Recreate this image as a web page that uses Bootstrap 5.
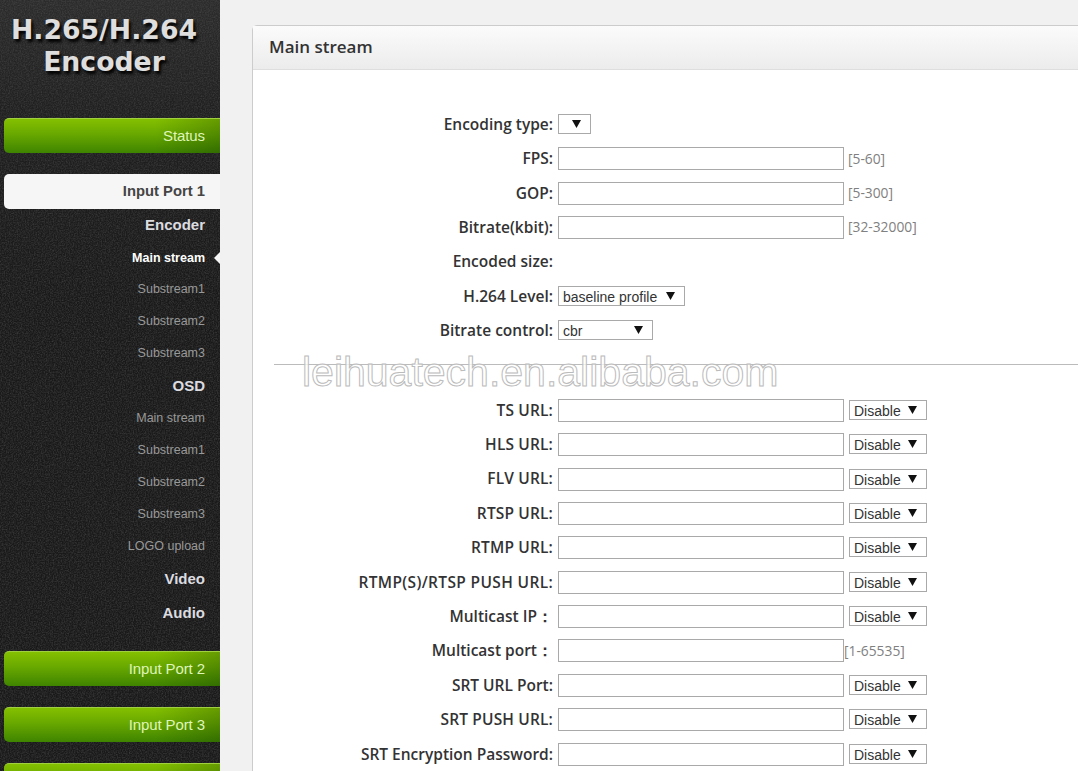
<!DOCTYPE html>
<html lang="en">
<head>
<meta charset="utf-8">
<title>Main stream</title>
<link href="https://cdn.jsdelivr.net/npm/bootstrap@5.3.0/dist/css/bootstrap.min.css" rel="stylesheet">
<style>
html,body{height:771px;overflow:hidden;}
body{background:#f1f1f1;font-family:"Open Sans",sans-serif;}
.shell{height:771px;position:relative;}
.side{width:220px;flex:none;background-color:#191919;font-family:"Liberation Sans",sans-serif;position:relative;overflow:hidden;}
.side::before{content:"";position:absolute;inset:0;background:linear-gradient(180deg,rgba(80,80,80,.34) 0,rgba(60,60,60,.2) 110px,rgba(0,0,0,0) 300px),url("data:image/svg+xml,%3Csvg xmlns='http://www.w3.org/2000/svg' width='220' height='771'%3E%3Cfilter id='n'%3E%3CfeTurbulence type='fractalNoise' baseFrequency='.75' numOctaves='2' seed='4'/%3E%3CfeColorMatrix values='0 0 0 0 1 0 0 0 0 1 0 0 0 0 1 .26 0 0 0 -.09'/%3E%3C/filter%3E%3Crect width='220' height='771' filter='url(%23n)'/%3E%3C/svg%3E");}
.side>*{position:relative;}
.logo{height:118px;padding-top:14px;text-align:center;font-family:"DejaVu Sans",sans-serif;font-weight:700;font-size:26.7px;line-height:32px;color:#dedede;text-shadow:2px 3px 3px #000;}
.logo div{margin-left:-12px;}
.pbtn{height:35px;margin-left:4px;padding-right:15px;border-radius:5px 0 0 5px;display:flex;align-items:center;justify-content:flex-end;font-size:15px;letter-spacing:-.1px;color:#dff5b8;background:linear-gradient(90deg,rgba(0,0,0,0) 70%,rgba(0,30,0,.22) 100%),linear-gradient(180deg,#84c000 0,#68a800 45%,#3f8400 100%);border-top:1px solid #a0d040;}
.pbtn.on{background:#f6f6f6;border:0;color:#444;font-weight:700;font-size:14.8px;letter-spacing:0;}
.gap-a{margin-top:21px;}
.m-item{height:33px;display:flex;align-items:center;justify-content:flex-end;padding-right:15px;font-size:15px;font-weight:700;color:#dcdce0;}
.m-item.tall{height:34px;}
.s-item{height:31.9px;display:flex;align-items:center;justify-content:flex-end;padding-right:15px;font-size:12.5px;color:#999;position:relative;}
.s-item.cur{color:#fff;font-weight:700;}
.s-item.cur::after{content:"";position:absolute;right:0;top:10px;border:6px solid transparent;border-right-color:#f6f6f6;border-left-width:0;}
.content{flex:1 1 auto;padding:25px 0 0 32px;min-width:0;overflow:hidden;}
.panel-box{width:900px;height:900px;border:1px solid #ccc;border-radius:5px 0 0 0;background:#fff;--bs-card-bg:#fff;}
.panel-top{height:44px;background:linear-gradient(180deg,#fbfbfb,#ececec);border-bottom:1px solid #dedede;padding:0 16px 2px;display:flex;align-items:center;font-size:17px;font-weight:600;color:#333;}
.panel-in{padding:37.3px 0 0 0;}
.frow{height:34.4px;display:flex;align-items:center;}
.flabel{width:305px;flex:none;text-align:right;padding-right:5px;font-size:15.5px;font-weight:600;color:#333;white-space:nowrap;}
.flabel.caps{letter-spacing:.15px;}
.flabel.caps-lg{letter-spacing:.35px;}
.tbox{width:286px;height:23px;flex:none;border:1px solid #a9a9a9;background:#fff;padding:0;border-radius:0;}
.fhint{margin-left:4px;font-size:13.8px;color:#808080;white-space:nowrap;}
.fhint.tight{margin-left:0;}
.pick{appearance:none;-webkit-appearance:none;height:20px;margin-bottom:1px;border:1px solid #a9a9a9;border-radius:0;padding:0 0 0 4px;font-family:"Liberation Sans",sans-serif;font-size:14px;color:#333;background:#fff url("data:image/svg+xml,%3Csvg xmlns='http://www.w3.org/2000/svg' width='9' height='9'%3E%3Cpath d='M0 1h9L4.500 9z' fill='%23111'/%3E%3C/svg%3E") no-repeat right 9px top 4px;}
.p-dis{width:78px;margin-left:5px;}
.p-enc{width:33px;}
.p-h{width:127px;}
.p-br{width:95px;}
.rule{height:1px;background:#bbb;margin:16px 0 28px 21px;}
.mark-wm{position:absolute;left:302px;top:348px;font-family:"Liberation Sans",sans-serif;font-size:41px;line-height:48px;color:rgba(255,255,255,.75);-webkit-text-stroke:1px #bbb;white-space:nowrap;pointer-events:none;}
</style>
</head>
<body>
<div class="shell d-flex">
  <aside class="side">
    <div class="logo"><div>H.265/H.264</div><div>Encoder</div></div>
    <div class="pbtn">Status</div>
    <div class="pbtn on gap-a">Input Port 1</div>
    <div class="m-item">Encoder</div>
    <div class="s-item cur">Main stream</div>
    <div class="s-item">Substream1</div>
    <div class="s-item">Substream2</div>
    <div class="s-item">Substream3</div>
    <div class="m-item">OSD</div>
    <div class="s-item">Main stream</div>
    <div class="s-item">Substream1</div>
    <div class="s-item">Substream2</div>
    <div class="s-item">Substream3</div>
    <div class="s-item">LOGO upload</div>
    <div class="m-item tall">Video</div>
    <div class="m-item tall">Audio</div>
    <div class="pbtn gap-a">Input Port 2</div>
    <div class="pbtn gap-a">Input Port 3</div>
    <div class="pbtn gap-a"></div>
  </aside>
  <main class="content">
    <div class="card panel-box">
      <div class="panel-top">Main stream</div>
      <div class="panel-in">
        <div class="frow"><label class="flabel">Encoding type:</label><select class="pick p-enc"></select></div>
        <div class="frow"><label class="flabel">FPS:</label><input class="tbox" type="text"><span class="fhint">[5-60]</span></div>
        <div class="frow"><label class="flabel">GOP:</label><input class="tbox" type="text"><span class="fhint">[5-300]</span></div>
        <div class="frow"><label class="flabel">Bitrate(kbit):</label><input class="tbox" type="text"><span class="fhint">[32-32000]</span></div>
        <div class="frow"><label class="flabel">Encoded size:</label></div>
        <div class="frow"><label class="flabel">H.264 Level:</label><select class="pick p-h"><option>baseline profile</option></select></div>
        <div class="frow"><label class="flabel">Bitrate control:</label><select class="pick p-br"><option>cbr</option></select></div>
        <div class="rule"></div>
        <div class="frow"><label class="flabel caps">TS URL:</label><input class="tbox" type="text"><select class="pick p-dis"><option>Disable</option></select></div>
        <div class="frow"><label class="flabel caps">HLS URL:</label><input class="tbox" type="text"><select class="pick p-dis"><option>Disable</option></select></div>
        <div class="frow"><label class="flabel caps">FLV URL:</label><input class="tbox" type="text"><select class="pick p-dis"><option>Disable</option></select></div>
        <div class="frow"><label class="flabel caps">RTSP URL:</label><input class="tbox" type="text"><select class="pick p-dis"><option>Disable</option></select></div>
        <div class="frow"><label class="flabel caps">RTMP URL:</label><input class="tbox" type="text"><select class="pick p-dis"><option>Disable</option></select></div>
        <div class="frow"><label class="flabel caps-lg">RTMP(S)/RTSP PUSH URL:</label><input class="tbox" type="text"><select class="pick p-dis"><option>Disable</option></select></div>
        <div class="frow"><label class="flabel">Multicast IP：</label><input class="tbox" type="text"><select class="pick p-dis"><option>Disable</option></select></div>
        <div class="frow"><label class="flabel">Multicast port：</label><input class="tbox" type="text"><span class="fhint tight">[1-65535]</span></div>
        <div class="frow"><label class="flabel">SRT URL Port:</label><input class="tbox" type="text"><select class="pick p-dis"><option>Disable</option></select></div>
        <div class="frow"><label class="flabel caps">SRT PUSH URL:</label><input class="tbox" type="text"><select class="pick p-dis"><option>Disable</option></select></div>
        <div class="frow"><label class="flabel">SRT Encryption Password:</label><input class="tbox" type="text"><select class="pick p-dis"><option>Disable</option></select></div>
      </div>
    </div>
  </main>
  <div class="mark-wm">leihuatech.en.alibaba.com</div>
</div>
<script src="https://cdn.jsdelivr.net/npm/bootstrap@5.3.0/dist/js/bootstrap.bundle.min.js"></script>
</body>
</html>
